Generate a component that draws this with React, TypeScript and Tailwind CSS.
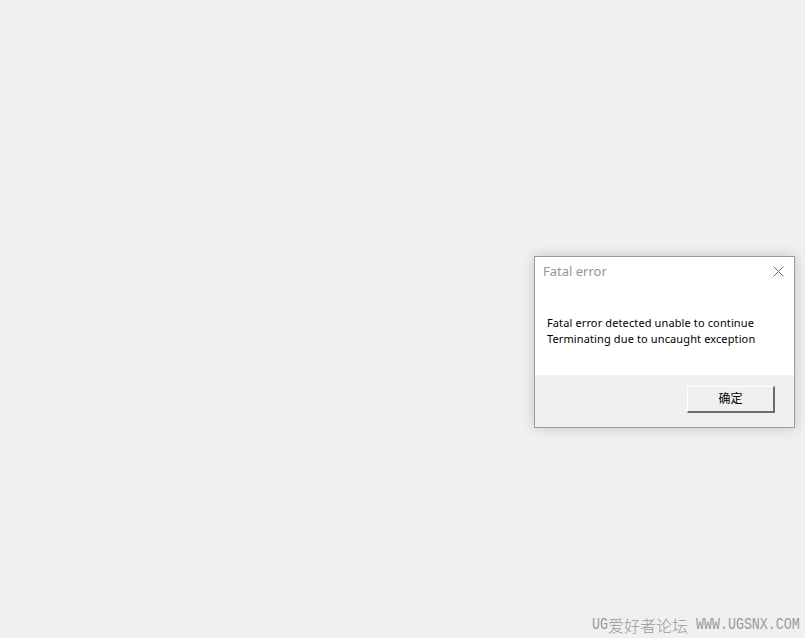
import React from "react";

export default function App() {
  return (
    <div
      className="relative h-[638px] w-full overflow-hidden bg-[#f0f0f0] pl-[534px] pt-[256px]"
      style={{ fontFamily: '"Noto Sans", "Noto Sans CJK SC", sans-serif' }}
    >
      <div className="flex h-[172px] w-[261px] flex-col border border-[#9a9a9a] bg-white shadow-[0_0_12px_rgba(0,0,0,0.18)]">
        <div className="flex h-[29px] items-center justify-between pb-[1px] pl-[8px] pr-[10px] pt-[1px]">
          <span className="text-[13px] text-[#959595]">Fatal error</span>
          <svg width="11" height="11" viewBox="0 0 11 11">
            <path d="M0.5 0.5 L10.5 10.5 M10.5 0.5 L0.5 10.5" stroke="#6a6a6a" strokeWidth="1" fill="none" />
          </svg>
        </div>
        <div className="flex flex-1 flex-col pl-[12px] pt-[29px] text-[11px] leading-[16px] tracking-[0.12px] text-black">
          <span>Fatal error detected unable to continue</span>
          <span>Terminating due to uncaught exception</span>
        </div>
        <div className="flex h-[52px] items-start justify-end bg-[#f0f0f0] pr-[19px] pt-[11px]">
          <button className="flex h-[27px] w-[88px] items-center justify-center border-b-[2px] border-l border-r-[2px] border-t border-b-[#6b6b6b] border-l-white border-r-[#6b6b6b] border-t-white bg-[#f0f0f0] text-[12px] text-black">
            确定
          </button>
        </div>
      </div>
      <div className="absolute bottom-[5px] right-[5px] flex h-[16px] items-center text-[#9a9a9a]">
        <span
          className="inline-block w-[16px] scale-y-[1.3] text-[13.3px] leading-[16px]"
          style={{ fontFamily: '"Liberation Mono", monospace' }}
        >
          UG
        </span>
        <span
          className="text-[16px] font-light leading-[16px] tracking-[0px]"
          style={{ fontFamily: '"Noto Sans CJK SC", sans-serif' }}
        >
          爱好者论坛
        </span>
        <span
          className="ml-[8px] inline-block w-[104px] scale-y-[1.3] whitespace-nowrap text-[13.3px] leading-[16px]"
          style={{ fontFamily: '"Liberation Mono", monospace' }}
        >
          WWW.UGSNX.COM
        </span>
      </div>
    </div>
  );
}
